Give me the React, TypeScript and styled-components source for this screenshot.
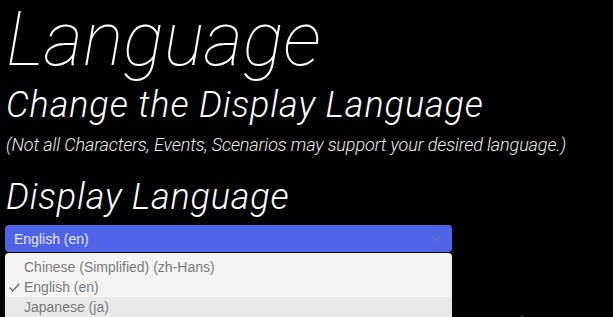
import * as React from 'react'
import styled, { createGlobalStyle } from 'styled-components'

const GlobalStyle = createGlobalStyle`
  html, body {
    margin: 0;
    padding: 0;
    background: #000;
    overflow: hidden;
  }
  body {
    font-family: Roboto, 'Liberation Sans', sans-serif;
    color: #fff;
  }
`

const Page = styled.div`
  padding: 0 6px;
  height: 317px;
  overflow: hidden;
`

const Title = styled.h1`
  margin: 0;
  font-size: 76px;
  font-weight: 100;
  font-style: italic;
  line-height: 78px;
`

const Subtitle = styled.h2`
  margin: 7px 0 0;
  font-size: 36px;
  font-weight: 300;
  font-style: italic;
  line-height: 40px;
  letter-spacing: 0.9px;
`

const Note = styled.p`
  margin: 9px 0 0;
  font-size: 18px;
  font-weight: 300;
  font-style: italic;
  line-height: 22px;
  color: #eee;
  letter-spacing: -0.12px;
`

const SectionTitle = styled.h3`
  margin: 21px 0 0;
  font-size: 36px;
  font-weight: 300;
  font-style: italic;
  line-height: 40px;
  letter-spacing: 0.8px;
`

const SelectWrap = styled.div`
  position: relative;
  margin: 8px 0 0 -1px;
  width: 447px;
`

const SelectButton = styled.div`
  display: flex;
  align-items: center;
  justify-content: space-between;
  height: 27px;
  padding: 0 9px;
  box-sizing: border-box;
  background: #4f63e9;
  border-radius: 4px;
  font-family: 'Liberation Sans', Arial, sans-serif;
  font-size: 14px;
  color: #e4e7fa;
`

const Chevron = styled.svg`
  width: 9px;
  height: 6px;
  margin-right: 2px;
`

const Options = styled.ul`
  position: absolute;
  top: 28px;
  left: 0;
  right: 0;
  margin: 0;
  padding: 4px 0;
  list-style: none;
  background: #f4f4f4;
  border-radius: 4px 4px 0 0;
  z-index: 2;
`

const Option = styled.li<{ highlighted?: boolean }>`
  position: relative;
  height: 20px;
  line-height: 20px;
  padding-left: 19px;
  font-family: 'Liberation Sans', Arial, sans-serif;
  font-size: 14px;
  color: #7b7b7b;
  background: ${({ highlighted }) => (highlighted ? '#e9e9e9' : 'transparent')};
`

const Check = styled.svg`
  position: absolute;
  left: 4px;
  top: 6px;
  width: 11px;
  height: 9px;
`

const NextTitle = styled.h2`
  margin: 50px 0 0;
  font-size: 70px;
  font-weight: 100;
  font-style: italic;
  white-space: nowrap;
`

const languages = [
  { label: 'Chinese (Simplified) (zh-Hans)' },
  { label: 'English (en)', selected: true },
  { label: 'Japanese (ja)', highlighted: true },
]

export default function App() {
  return (
    <>
      <GlobalStyle />
      <Page>
        <Title>Language</Title>
        <Subtitle>Change the Display Language</Subtitle>
        <Note>(Not all Characters, Events, Scenarios may support your desired language.)</Note>
        <SectionTitle>Display Language</SectionTitle>
        <SelectWrap>
          <SelectButton>
            <span>English (en)</span>
            <Chevron viewBox="0 0 9 6">
              <path d="M0.8 0.8 L4.5 4.6 L8.2 0.8" fill="none" stroke="#6b72a8" strokeWidth="1.3" />
            </Chevron>
          </SelectButton>
          <Options>
            {languages.map((lang) => (
              <Option key={lang.label} highlighted={lang.highlighted}>
                {lang.selected && (
                  <Check viewBox="0 0 11 9">
                    <path d="M0.8 4.6 L3.8 7.8 L10.2 0.8" fill="none" stroke="#555" strokeWidth="1.2" />
                  </Check>
                )}
                {lang.label}
              </Option>
            ))}
          </Options>
        </SelectWrap>
        <NextTitle>Machine Translation</NextTitle>
      </Page>
    </>
  )
}
